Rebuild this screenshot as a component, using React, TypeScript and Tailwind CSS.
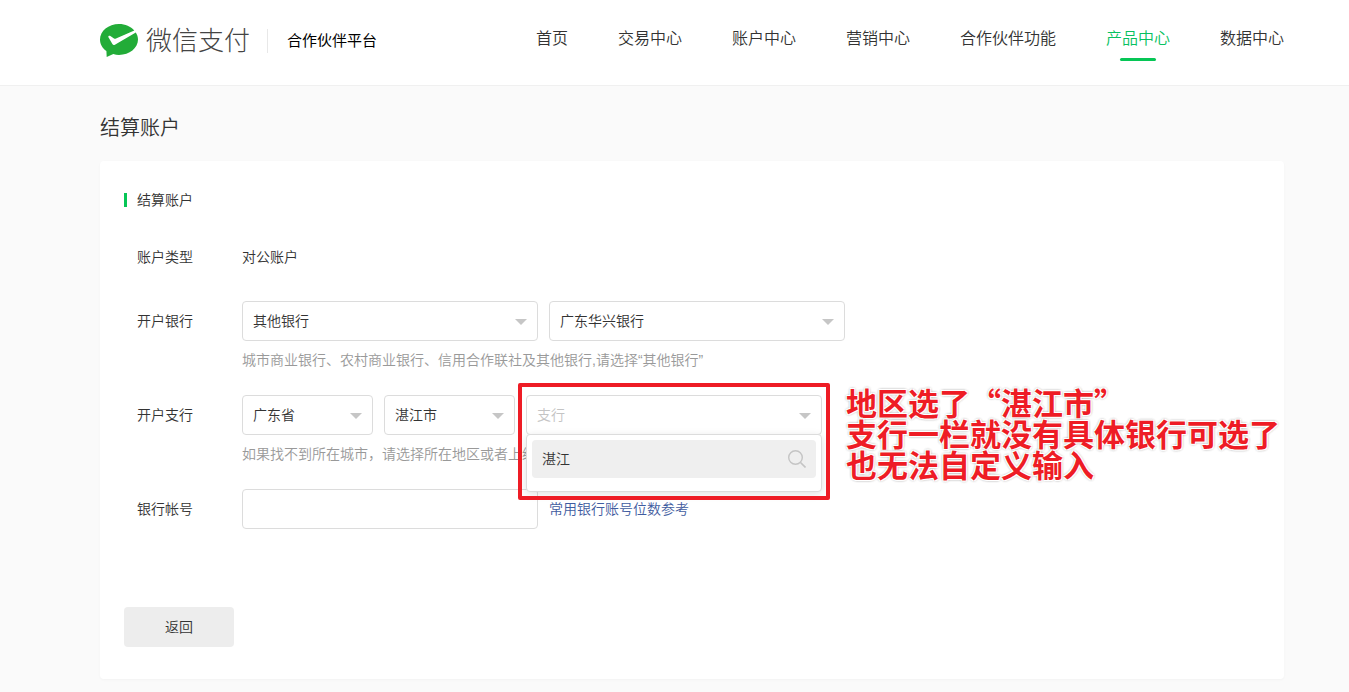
import type { ReactNode } from "react";

const navItems = ["首页", "交易中心", "账户中心", "营销中心", "合作伙伴功能", "产品中心", "数据中心"];

function Logo() {
  return (
    <svg width="38" height="34" viewBox="0 0 38 34" aria-hidden="true">
      <path
        fill="#22ac38"
        d="M19 0C8.500 0 0 7 0 15.500c0 4.700 2.500 8.700 6.400 11.600L6.700 33l6.600-3c1.800.6 3.700.9 5.700.9 10.500 0 19-6.900 19-15.400 0-2.600-.8-5-2.200-7.100L14.900 20.700c-1 .5-2 .3-2.500-.7L8.300 13c-.2-1 .8-1.700 1.700-1.200l4 2.700c.7.400 1.300.4 2 .1L34.300 6.400C30.800 2.500 25.300 0 19 0z"
      />
    </svg>
  );
}

function SelectBox({
  id,
  label,
  value,
  wide,
  placeholder,
}: {
  id: string;
  label: string;
  value: string;
  wide?: boolean;
  placeholder?: boolean;
}) {
  return (
    <div className={wide ? "relative w-[296px]" : "relative w-[131px]"}>
      <select
        id={id}
        aria-label={label}
        className={
          "block h-10 w-full appearance-none rounded border border-[#dcdcdc] bg-white px-2.5 text-sm outline-none " +
          (placeholder ? "text-[#c4c4c4]" : "text-[#333]")
        }
      >
        <option>{value}</option>
      </select>
      <svg
        className="pointer-events-none absolute right-[11px] top-[18px]"
        width="12"
        height="6"
        viewBox="0 0 12 6"
        aria-hidden="true"
      >
        <path d="M0 0h12L6 6z" fill="#c6c6c6" />
      </svg>
    </div>
  );
}

function Row({ label, htmlFor, children }: { label: string; htmlFor?: string; children: ReactNode }) {
  return (
    <div className="flex">
      <label htmlFor={htmlFor} className="w-[105px] shrink-0 leading-10">
        {label}
      </label>
      <div className="min-w-0 grow">{children}</div>
    </div>
  );
}

export default function App() {
  return (
    <div
      lang="zh-CN"
      className="min-h-screen bg-[#fafafa] pb-3 font-['Liberation_Sans','Noto_Sans_CJK_SC',sans-serif] text-sm font-[350] text-[#333]"
    >
      <header className="flex h-[86px] items-start justify-between border-b border-[#f0f0f0] bg-white pl-[100px] pr-[65px]">
        <div className="flex h-[82px] items-center">
          <Logo />
          <span className="ml-2 text-[26px] font-light leading-10 text-[#444]">微信支付</span>
          <span className="ml-[17px] h-6 w-px bg-[#e8e8e8]" />
          <span className="ml-[19px] text-[15px] font-normal text-black">合作伙伴平台</span>
        </div>
        <nav className="flex gap-[50px] pt-[27px] text-base">
          {navItems.map((item) => {
            const active = item === "产品中心";
            return (
              <a
                key={item}
                href="#"
                className={"flex flex-col items-center gap-[7px] leading-6 " + (active ? "text-[#07c160]" : "")}
              >
                {item}
                {active && <span className="h-[3px] w-9 rounded-sm bg-[#06c656]" />}
              </a>
            );
          })}
        </nav>
      </header>

      <main className="pl-[100px] pr-[65px] pt-[27px]">
        <h1 className="text-xl leading-[30px]">结算账户</h1>

        <section className="mt-[18px] rounded bg-white px-6 pb-8 pt-7 shadow-[0_1px_3px_rgba(0,0,0,0.03)]">
          <h2 className="flex items-center gap-2.5 leading-[22px]">
            <span className="h-3.5 w-[3px] bg-[#06c656]" />
            结算账户
          </h2>

          <form className="pl-[13px] pt-[26px]">
            <Row label="账户类型">
              <p className="leading-10">对公账户</p>
            </Row>

            <div className="pt-6">
              <Row label="开户银行" htmlFor="bank-kind">
                <div className="flex gap-[11px]">
                  <SelectBox id="bank-kind" label="开户银行" value="其他银行" wide />
                  <SelectBox id="bank" label="银行" value="广东华兴银行" wide />
                </div>
                <p className="pt-2 leading-[22px] text-[#999]">
                  城市商业银行、农村商业银行、信用合作联社及其他银行,请选择“其他银行”
                </p>
              </Row>
            </div>

            <div className="pt-6">
              <Row label="开户支行" htmlFor="province">
                <div className="flex gap-[11px]">
                  <SelectBox id="province" label="省份" value="广东省" />
                  <SelectBox id="city" label="城市" value="湛江市" />
                  <div className="relative z-10">
                    <SelectBox id="branch" label="支行" value="支行" wide placeholder />
                    <div className="absolute inset-x-0 top-[39px] h-[58px] rounded border border-[#dcdcdc] bg-white p-[5px] shadow-[0_2px_8px_rgba(0,0,0,0.12)]">
                      <div className="flex h-[38px] items-center rounded bg-[#efefef] px-2.5">
                        <input
                          aria-label="搜索支行"
                          defaultValue="湛江"
                          className="min-w-0 grow bg-transparent outline-none"
                        />
                        <svg width="18" height="18" viewBox="0 0 18 18" fill="none" stroke="#c4c4c4" aria-hidden="true">
                          <circle cx="7.500" cy="7.500" r="6.800" strokeWidth="1.400" />
                          <path d="M12.500 12.500l5 5" strokeWidth="1.600" />
                        </svg>
                      </div>
                    </div>
                    <div className="pointer-events-none absolute -inset-x-2 -bottom-[65px] -top-3 rounded-[2px] border-4 border-[#ee1c25]" />
                    <p className="absolute -top-[9px] left-80 whitespace-nowrap font-['Noto_Sans_CJK_SC',sans-serif] text-[31px] font-bold leading-[31px] text-[#ee1c25] [text-shadow:1px_1px_0_#fff,-1px_-1px_0_#fff,1px_-1px_0_#fff,-1px_1px_0_#fff,0_0_3px_#888,0_0_3px_#999]">
                      地区选了“湛江市”
                      <br />
                      支行一栏就没有具体银行可选了
                      <br />
                      也无法自定义输入
                    </p>
                  </div>
                </div>
                <p className="pt-2 leading-[22px] text-[#999]">如果找不到所在城市，请选择所在地区或者上级城市</p>
              </Row>
            </div>

            <div className="pt-6">
              <Row label="银行帐号" htmlFor="account">
                <div className="flex items-center gap-[11px]">
                  <input
                    id="account"
                    className="h-10 w-[296px] rounded border border-[#dcdcdc] bg-white px-2.5 outline-none"
                  />
                  <a href="#" className="text-[#3f5ca0]">
                    常用银行账号位数参考
                  </a>
                </div>
              </Row>
            </div>
          </form>

          <button type="button" className="mt-[78px] h-10 w-[110px] rounded bg-[#ededed]">
            返回
          </button>
        </section>
      </main>
    </div>
  );
}
